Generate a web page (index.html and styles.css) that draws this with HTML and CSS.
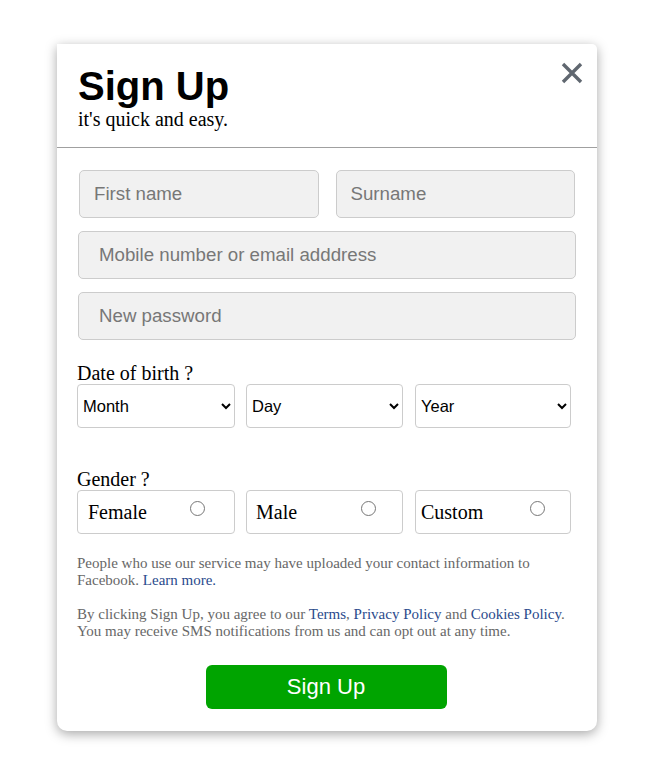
FILE: index.html
```html
<!DOCTYPE html>
<html lang="en">
<head>
<meta charset="utf-8">
<title>Sign Up</title>
<link rel="stylesheet" href="styles.css">
</head>
<body>
<div class="card">
  <div class="header">
    <div class="titles">
      <h1 class="title">Sign Up</h1>
      <p class="subtitle">it's quick and easy.</p>
    </div>
    <button class="close" aria-label="Close">
      <svg width="22" height="22" viewBox="0 0 22 22"><path d="M2 2 L20 20 M20 2 L2 20" stroke="#606770" stroke-width="3.4" stroke-linecap="butt" fill="none"/></svg>
    </button>
  </div>
  <form class="form">
    <div class="row-two">
      <input class="field field-name" type="text" placeholder="First name">
      <input class="field field-name" type="text" placeholder="Surname">
    </div>
    <input class="field field-wide" type="text" placeholder="Mobile number or email adddress">
    <input class="field field-wide" type="password" placeholder="New password">

    <div class="group dob">
      <div class="group-label">Date of birth ?</div>
      <div class="row-three">
        <select class="select"><option>Month</option></select>
        <select class="select"><option>Day</option></select>
        <select class="select"><option>Year</option></select>
      </div>
    </div>

    <div class="group gender">
      <div class="group-label">Gender ?</div>
      <div class="row-three">
        <label class="choice c-female"><span>Female</span><input type="radio" name="g"></label>
        <label class="choice c-male"><span>Male</span><input type="radio" name="g"></label>
        <label class="choice c-custom"><span>Custom</span><input type="radio" name="g"></label>
      </div>
    </div>

    <p class="note first-note">People who use our service may have uploaded your contact information to Facebook. <a href="#">Learn more.</a></p>
    <p class="note">By clicking Sign Up, you agree to our <a href="#">Terms</a>, <a href="#">Privacy Policy</a> and <a href="#">Cookies Policy</a>. You may receive SMS notifications from us and can opt out at any time.</p>

    <div class="actions">
      <button type="button" class="submit">Sign Up</button>
    </div>
  </form>
</div>
</body>
</html>
```
FILE: styles.css
```css
html, body {
  margin: 0;
  padding: 0;
  background: #ffffff;
}
body {
  padding: 44px 0 30px 57px;
  font-family: "Liberation Serif", "Times New Roman", serif;
}
.card {
  width: 540px;
  background: #fff;
  border-radius: 0 5px 10px 10px;
  box-shadow: 0 3px 12px rgba(0, 0, 0, 0.35);
}
.header {
  display: flex;
  justify-content: space-between;
  align-items: flex-start;
  padding: 19px 14px 18px 21px;
  border-bottom: 1px solid #a0a0a0;
}
.title {
  margin: 0;
  font-family: "Liberation Sans", Arial, sans-serif;
  font-size: 40px;
  font-weight: bold;
  line-height: 46px;
  color: #000;
}
.subtitle {
  margin: 0;
  font-size: 20px;
  line-height: 20px;
  color: #000;
}
.close {
  margin-top: -1px;
  padding: 0;
  border: 0;
  background: none;
  width: 22px;
  height: 22px;
  cursor: pointer;
}
.close svg { display: block; }
.form {
  padding: 22px 21px 22px 20px;
  display: flex;
  flex-direction: column;
}
.row-two {
  display: flex;
  gap: 17px;
  padding: 0 1px 0 2px;
  margin-bottom: 13px;
}
.field {
  box-sizing: border-box;
  height: 48px;
  border: 1px solid #cccccc;
  border-radius: 5px;
  background: #f1f1f1;
  font-family: "Liberation Sans", Arial, sans-serif;
  font-size: 18.7px;
  color: #333;
  outline: none;
}
.field::placeholder { color: #777777; }
.field-name {
  flex: 1;
  min-width: 0;
  padding: 0 14px;
}
.field-wide {
  width: 498px;
  margin-left: 1px;
  padding: 0 20px;
  margin-bottom: 13px;
}
.group-label {
  font-size: 20px;
  line-height: 21px;
  color: #000;
}
.dob { margin-top: 10px; }
.gender { margin-top: 41px; }
.row-three {
  display: grid;
  grid-template-columns: 158px 157px 157px;
  column-gap: 11px;
  width: 495px;
}
.row-three > :nth-child(3) { margin-left: 1px; }
.select {
  box-sizing: border-box;
  height: 44px;
  border: 1px solid #cccccc;
  border-radius: 4px;
  background: #fff;
  font-family: "Liberation Sans", Arial, sans-serif;
  font-size: 16.5px;
  color: #000;
  padding: 0 3px 0 1px;
}
.choice {
  box-sizing: border-box;
  height: 44px;
  border: 1px solid #cccccc;
  border-radius: 4px;
  display: flex;
  align-items: center;
  justify-content: space-between;
  font-size: 20px;
  color: #000;
}
.choice span { padding-top: 1px; }
.choice input {
  width: 15px;
  height: 15px;
  margin: -7px 0 0 0;
}
.c-female { padding: 0 29px 0 10px; }
.c-male { padding: 0 26px 0 9px; }
.c-custom { padding: 0 25px 0 5px; }
.note {
  margin: 0;
  font-size: 15px;
  line-height: 17px;
  color: #676767;
  width: 495px;
}
.first-note { margin-top: 21px; margin-bottom: 17px; }
.note a {
  color: #2a4a8c;
  text-decoration: none;
}
.actions {
  display: flex;
  justify-content: center;
  margin-top: 25px;
}
.submit {
  width: 241px;
  height: 44px;
  border: 0;
  border-radius: 6px;
  background: #00a400;
  color: #fff;
  font-family: "Liberation Sans", Arial, sans-serif;
  font-size: 22px;
  cursor: pointer;
  margin-right: 1px;
}
```
